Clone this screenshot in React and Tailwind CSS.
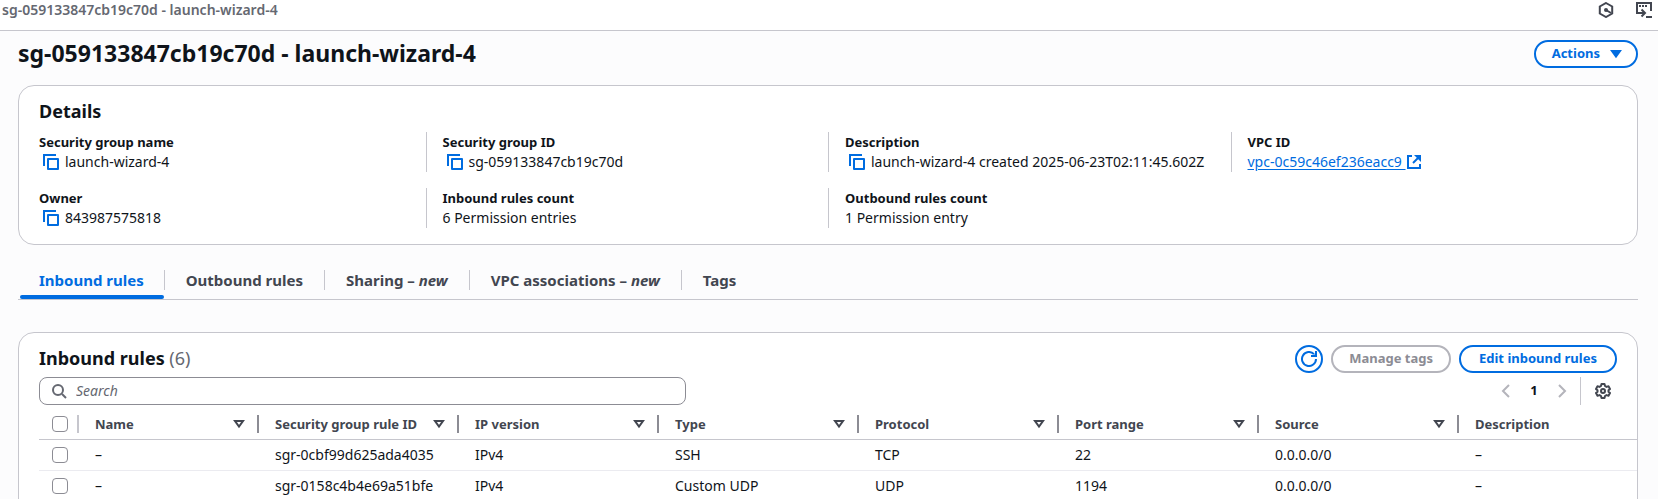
import React from "react";

function Icon({ children, className = "" }) {
  return (
    <svg
      viewBox="0 0 16 16"
      aria-hidden="true"
      className={"size-4 shrink-0 fill-none stroke-current stroke-2 " + className}
    >
      {children}
    </svg>
  );
}

const CopyIcon = () => (
  <Icon>
    <path d="M15 5H5v10h10V5Z" strokeLinejoin="round" />
    <path d="M13 1H1v11" />
  </Icon>
);

const ExternalIcon = () => (
  <Icon>
    <path d="M8 1h7v7l-2.500-2.500-2-2L8 1Z" fill="currentColor" stroke="none" />
    <path d="m7 9 6-6" />
    <path d="M14 10v4H2V2h4" />
  </Icon>
);

const SortIcon = () => (
  <Icon>
    <path d="M4 5h8l-4 5.5L4 5Z" />
  </Icon>
);

function Detail({ label, children, first }) {
  return (
    <div className={"px-4 " + (first ? "" : "border-l border-[#c6c6cd]")}>
      <dt className="text-[13px] leading-5 font-bold">{label}</dt>
      <dd className="flex items-center text-sm leading-5 whitespace-nowrap">{children}</dd>
    </div>
  );
}

function Copyable({ label, children }) {
  return (
    <>
      <button type="button" aria-label={"Copy " + label} className="mr-1.5 ml-1 text-[#006ce0]">
        <CopyIcon />
      </button>
      {children}
    </>
  );
}

function Tab({ active, first, children }) {
  return (
    <div className="flex flex-col">
      <div className={"flex h-5 items-center " + (first ? "px-5" : "border-l border-[#c6c6cd] px-[21px]")}>
        <button
          type="button"
          role="tab"
          aria-selected={!!active}
          className={
            "text-[15px] leading-5 font-bold whitespace-nowrap " +
            (active ? "text-[#006ce0]" : "text-[#424650]")
          }
        >
          {children}
        </button>
      </div>
      {active && <div className="mt-[5px] ml-px h-1 rounded-[2px] bg-[#006ce0]" />}
    </div>
  );
}

const columns = [
  "Name",
  "Security group rule ID",
  "IP version",
  "Type",
  "Protocol",
  "Port range",
  "Source",
  "Description",
];

const rules = [
  ["–", "sgr-0cbf99d625ada4035", "IPv4", "SSH", "TCP", "22", "0.0.0.0/0", "–"],
  ["–", "sgr-0158c4b4e69a51bfe", "IPv4", "Custom UDP", "UDP", "1194", "0.0.0.0/0", "–"],
];

function Checkbox({ label }) {
  return (
    <input
      type="checkbox"
      aria-label={label}
      className="ml-[13px] block size-4 appearance-none rounded-[4px] border border-[#8c8c94] bg-white checked:bg-[#006ce0]"
    />
  );
}

export default function App() {
  return (
    <div className="flex h-screen flex-col overflow-hidden bg-[#fcfcfd] font-['Noto_Sans',sans-serif] text-[#0f141a]">
      <nav
        aria-label="Breadcrumb"
        className="flex shrink-0 items-center justify-between border-b border-[#c6c6cd] bg-white pr-1.5 pb-2.5 pl-0.5"
      >
        <span className="text-sm leading-5 font-semibold text-[#656871]">
          sg-059133847cb19c70d - launch-wizard-4
        </span>
        <div className="flex gap-[22px] text-[#424650]">
          <button type="button" aria-label="Diagnostics">
            <Icon>
              <path d="M8 1 14.2 4.5v7L8 15l-6.2-3.5v-7L8 1Z" />
              <circle cx="8" cy="8" r="2" fill="currentColor" stroke="none" />
              <path d="m8 8 5 3" />
            </Icon>
          </button>
          <button type="button" aria-label="CloudShell">
            <Icon>
              <path d="M4 11H1V1h14v8" />
              <path d="M3 4h2M6 4h2M9 4h2" />
              <path d="M3 11h5M5.5 7.500 9 11l-3.500 3.500" />
              <path d="M10 15h6" />
            </Icon>
          </button>
        </div>
      </nav>

      <main className="flex-1 pt-[9px] pr-5 pl-[18px]">
        <header className="flex h-7 items-center justify-between">
          <h1 className="pb-0.5 text-[23px] leading-7 font-bold">
            sg-059133847cb19c70d - launch-wizard-4
          </h1>
          <button
            type="button"
            className="flex h-7 items-center gap-2 rounded-full border-2 border-[#006ce0] bg-white pr-3 pl-4 text-[13px] font-bold text-[#006ce0]"
          >
            Actions
            <Icon>
              <path d="M4 5h8l-4 5.500L4 5Z" fill="currentColor" />
            </Icon>
          </button>
        </header>

        <section className="mt-[17px] rounded-2xl border border-[#c6c6cd] bg-white px-5 pt-[11px] pb-4">
          <h2 className="text-lg leading-7 font-bold">Details</h2>
          <dl className="-mx-4 mt-[7px] grid grid-cols-4 gap-y-4">
            <Detail label="Security group name" first>
              <Copyable label="security group name">launch-wizard-4</Copyable>
            </Detail>
            <Detail label="Security group ID">
              <Copyable label="security group ID">sg-059133847cb19c70d</Copyable>
            </Detail>
            <Detail label="Description">
              <Copyable label="description">launch-wizard-4 created 2025-06-23T02:11:45.602Z</Copyable>
            </Detail>
            <Detail label="VPC ID">
              <a href="#vpc" className="flex items-center text-[#006ce0] underline underline-offset-2">
                vpc-0c59c46ef236eacc9&nbsp;
                <ExternalIcon />
              </a>
            </Detail>
            <Detail label="Owner" first>
              <Copyable label="owner">843987575818</Copyable>
            </Detail>
            <Detail label="Inbound rules count">6 Permission entries</Detail>
            <Detail label="Outbound rules count">1 Permission entry</Detail>
          </dl>
        </section>

        <div role="tablist" className="mt-[25px] flex h-[30px] border-b border-[#c6c6cd] pl-px">
          <Tab active first>
            Inbound rules
          </Tab>
          <Tab>Outbound rules</Tab>
          <Tab>
            Sharing – <em>new</em>
          </Tab>
          <Tab>
            VPC associations – <em>new</em>
          </Tab>
          <Tab>Tags</Tab>
        </div>

        <section className="mt-8 rounded-2xl border border-[#c6c6cd] bg-white pt-3 pb-5 pl-5">
          <div className="flex items-center justify-between pr-5">
            <h2 className="pb-0.5 text-lg leading-[26px] font-bold">
              Inbound rules <span className="font-normal text-[#656871]">(6)</span>
            </h2>
            <div className="flex gap-2 text-[13px] font-bold">
              <button
                type="button"
                aria-label="Refresh"
                className="flex size-7 items-center justify-center rounded-full border-2 border-[#006ce0] text-[#006ce0]"
              >
                <Icon>
                  <path d="M15 8a7 7 0 1 1-2-4.900" />
                  <path d="M10 5h5V0" />
                  <path d="M12 5 15 2v3Z" fill="currentColor" stroke="none" />
                </Icon>
              </button>
              <button
                type="button"
                disabled
                className="h-7 rounded-full border-2 border-[#b4b4bb] px-4 text-[#8c8c94]"
              >
                Manage tags
              </button>
              <button
                type="button"
                className="h-7 rounded-full border-2 border-[#006ce0] px-[18px] text-[#006ce0]"
              >
                Edit inbound rules
              </button>
            </div>
          </div>

          <div className="mt-1 flex items-center justify-between pr-5">
            <label className="flex h-7 w-[41%] items-center gap-2 rounded-lg border border-[#8c8c94] px-3 text-[#656871]">
              <Icon>
                <circle cx="6" cy="7" r="5" />
                <path d="m10 11 4 4" />
              </Icon>
              <input
                type="search"
                aria-label="Search rules"
                placeholder="Search"
                className="min-w-0 flex-1 bg-transparent text-sm outline-none placeholder:text-[#656871] placeholder:italic"
              />
            </label>
            <div className="flex h-7 items-center">
              <button type="button" aria-label="Previous page" disabled className="text-[#b4b4bb]">
                <Icon>
                  <path d="m11 2-6 6 6 6" />
                </Icon>
              </button>
              <button type="button" aria-current="page" className="w-10 text-[13px] font-bold">
                1
              </button>
              <button type="button" aria-label="Next page" disabled className="text-[#b4b4bb]">
                <Icon>
                  <path d="m5 2 6 6-6 6" />
                </Icon>
              </button>
              <div className="mr-3.5 ml-2.5 h-7 w-px bg-[#c6c6cd]" />
              <button type="button" aria-label="Preferences" className="mr-1.5 text-[#424650]">
                <Icon>
                  <path
                    strokeLinejoin="round"
                    d="M6.500 1h3l.5 2 1.500.9 2-.6 1.500 2.600L13.500 7.300v1.400L15 10.100l-1.500 2.600-2-.6L10 13l-.5 2h-3L6 13l-1.500-.9-2 .6L1 10.100l1.500-1.400V7.300L1 5.900l1.500-2.600 2 .6L6 3l.5-2Z"
                  />
                  <circle cx="8" cy="8" r="2" />
                </Icon>
              </button>
            </div>
          </div>

          <table className="mt-1 w-full table-fixed text-left text-sm leading-5">
            <colgroup>
              <col className="w-10" />
              <col className="w-[180px]" />
              <col className="w-[200px]" />
              <col className="w-[200px]" />
              <col className="w-[200px]" />
              <col className="w-[200px]" />
              <col className="w-[200px]" />
              <col className="w-[200px]" />
              <col />
            </colgroup>
            <thead>
              <tr className="h-[30px] border-b border-[#c6c6cd] text-[13px] text-[#424650]">
                <th className="p-0">
                  <div className="flex h-[18px] items-center border-r-2 border-[#c6c6cd]">
                    <Checkbox label="Select all rules" />
                  </div>
                </th>
                {columns.map((name, i) => {
                  const last = i === columns.length - 1;
                  return (
                    <th key={name} scope="col" className="p-0 font-bold">
                      <div
                        className={
                          "flex h-[18px] items-center justify-between pr-2.5 pl-4 whitespace-nowrap " +
                          (last ? "" : "border-r-2 border-[#8c8c94]")
                        }
                      >
                        {name}
                        {!last && <SortIcon />}
                      </div>
                    </th>
                  );
                })}
              </tr>
            </thead>
            <tbody>
              {rules.map((rule) => (
                <tr key={rule[1]} className="h-[31px] border-b border-[#ebebf0]">
                  <td className="p-0">
                    <Checkbox label={"Select " + rule[1]} />
                  </td>
                  {rule.map((value, i) => (
                    <td key={i} className="py-0 pr-0 pl-4 whitespace-nowrap">
                      {value}
                    </td>
                  ))}
                </tr>
              ))}
            </tbody>
          </table>
        </section>
      </main>
    </div>
  );
}
